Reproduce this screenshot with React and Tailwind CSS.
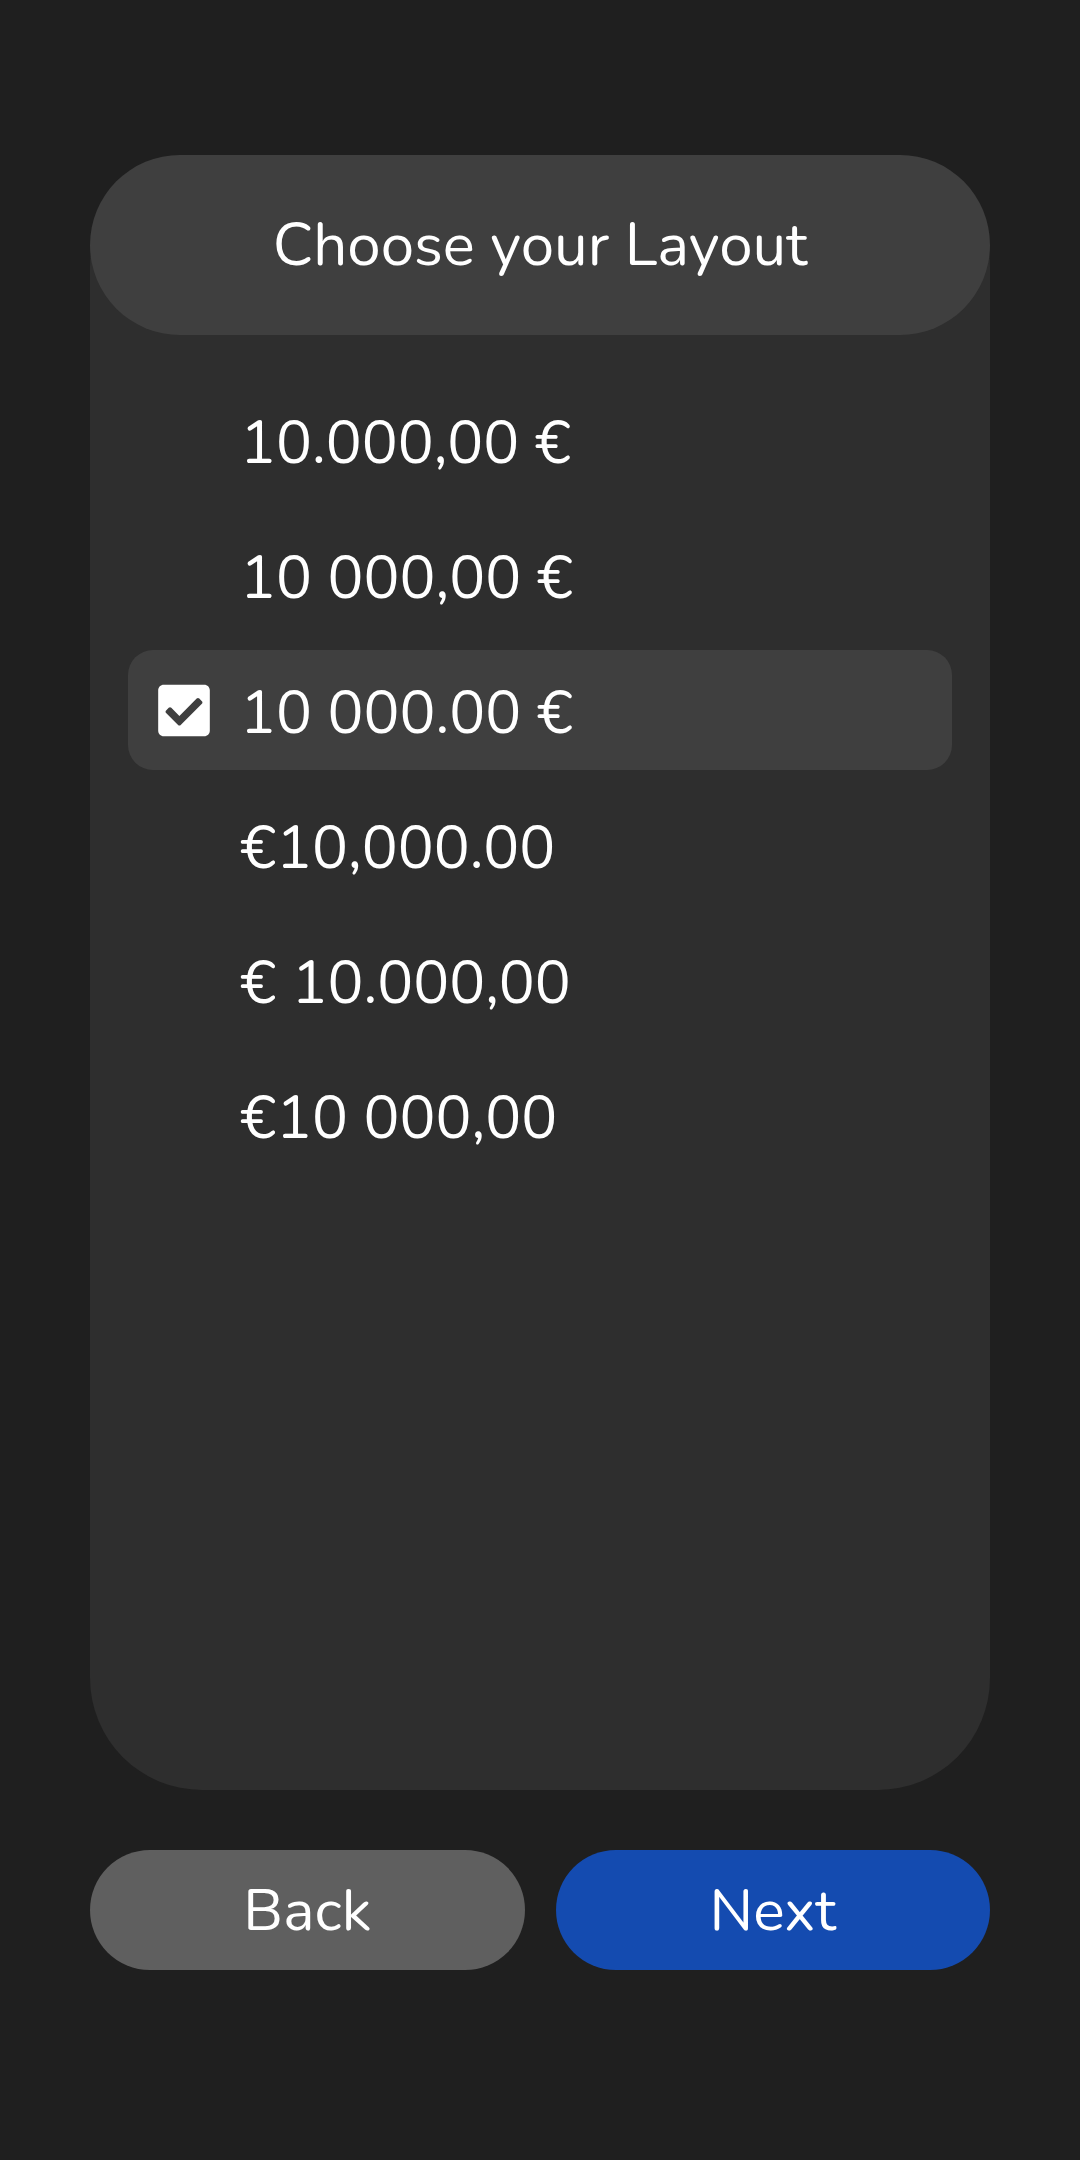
import React from "react";
import { FaCheckSquare } from "react-icons/fa";

const items = [
  "10.000,00 €",
  "10 000,00 €",
  "10 000.00 €",
  "€10,000.00",
  "€ 10.000,00",
  "€10 000,00",
];

export default function App() {
  const selected = 2;
  return (
    <div
      className="w-[1080px] min-h-[2160px] bg-[#1f1f1f] pt-[155px] px-[90px] text-white"
      style={{ fontFamily: "Nunito, Lato, 'Noto Sans', sans-serif" }}
    >
      <div className="h-[1635px] rounded-[112px] bg-[#2e2e2e] flex flex-col">
        <div className="h-[180px] rounded-full bg-[#3f3f3f] flex items-center justify-center text-[60px] leading-none">
          Choose your Layout
        </div>
        <div className="mt-[45px] px-[38px] flex flex-col gap-[15px]">
          {items.map((t, i) => (
            <div
              key={i}
              className={
                "h-[120px] rounded-[25px] flex items-center pl-[30px] gap-[30px] " +
                (i === selected ? "bg-[#3f3f3f]" : "")
              }
            >
              <div className="w-[52px] h-[52px] flex items-center justify-center">
                {i === selected && (
                  <FaCheckSquare className="text-white" size={59} />
                )}
              </div>
              <span className="text-[60px] leading-none pt-[5px]">{t}</span>
            </div>
          ))}
        </div>
      </div>
      <div className="mt-[60px] flex gap-[31px]">
        <button className="flex-1 h-[120px] rounded-full bg-[#5f5f5f] text-white text-[59px] leading-none flex items-center justify-center">
          Back
        </button>
        <button className="flex-1 h-[120px] rounded-full bg-[#144bb0] text-white text-[59px] leading-none flex items-center justify-center">
          Next
        </button>
      </div>
    </div>
  );
}
